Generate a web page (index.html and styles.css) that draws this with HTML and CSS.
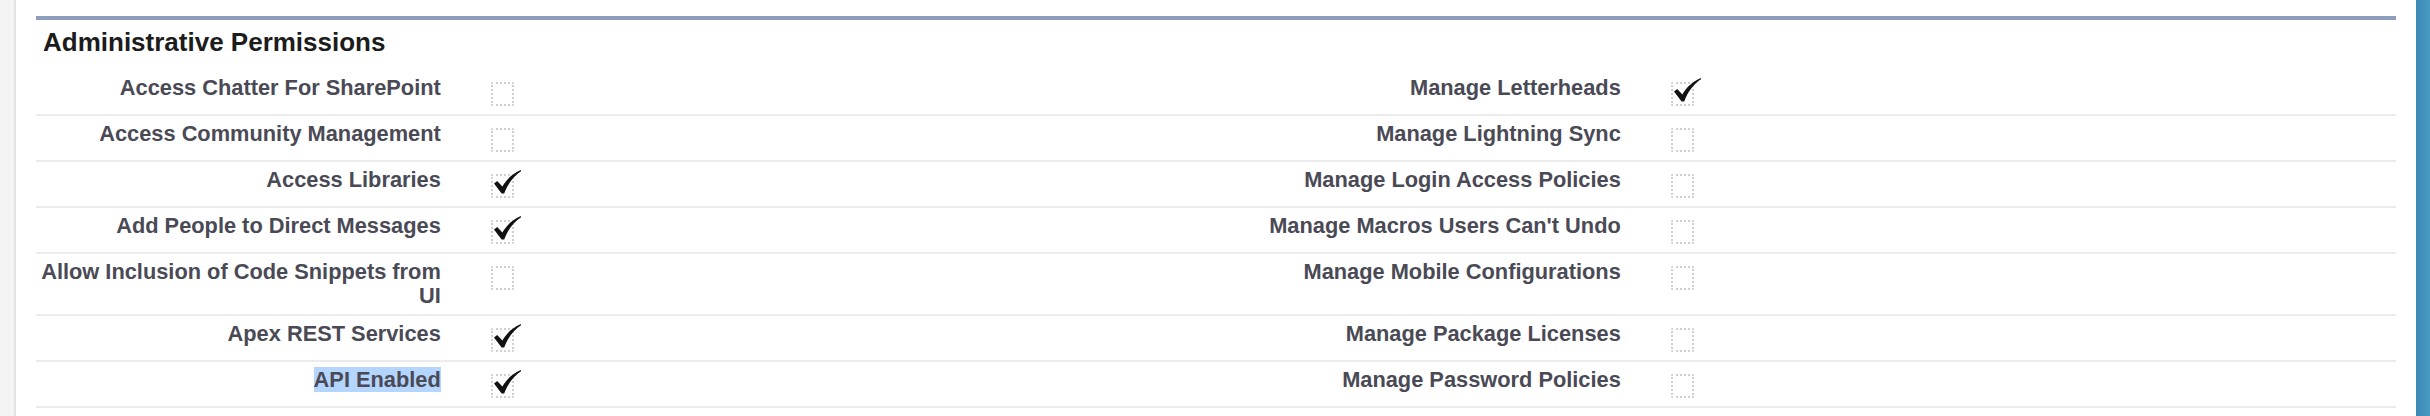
FILE: index.html
```html
<!DOCTYPE html>
<html>
<head>
<meta charset="utf-8">
<title>Administrative Permissions</title>
<link rel="stylesheet" href="styles.css">
</head>
<body>
<div class="frame">
  <div class="left-rail"></div>
  <div class="main">
    <div class="section">
      <h3 class="section-title">Administrative Permissions</h3>
      <table class="detail-list">
        <colgroup>
          <col class="c-label"><col class="c-data"><col class="c-label"><col class="c-data">
        </colgroup>
        <tbody>
          <tr>
            <td class="label">Access Chatter For SharePoint</td>
            <td class="data"><span class="cb"></span></td>
            <td class="label">Manage Letterheads</td>
            <td class="data"><span class="cb checked"><svg class="tick" viewBox="0 0 27 24" width="27" height="24"><path d="M0 13.5 L3.2 11 L8.4 16.6 C12 9.8 18 3.8 27 0 L27 1.3 C20 6 14 13 10.2 23.6 L7.6 23.6 Z"/></svg></span></td>
          </tr>
          <tr>
            <td class="label">Access Community Management</td>
            <td class="data"><span class="cb"></span></td>
            <td class="label">Manage Lightning Sync</td>
            <td class="data"><span class="cb"></span></td>
          </tr>
          <tr>
            <td class="label">Access Libraries</td>
            <td class="data"><span class="cb checked"><svg class="tick" viewBox="0 0 27 24" width="27" height="24"><path d="M0 13.5 L3.2 11 L8.4 16.6 C12 9.8 18 3.8 27 0 L27 1.3 C20 6 14 13 10.2 23.6 L7.6 23.6 Z"/></svg></span></td>
            <td class="label">Manage Login Access Policies</td>
            <td class="data"><span class="cb"></span></td>
          </tr>
          <tr>
            <td class="label">Add People to Direct Messages</td>
            <td class="data"><span class="cb checked"><svg class="tick" viewBox="0 0 27 24" width="27" height="24"><path d="M0 13.5 L3.2 11 L8.4 16.6 C12 9.8 18 3.8 27 0 L27 1.3 C20 6 14 13 10.2 23.6 L7.6 23.6 Z"/></svg></span></td>
            <td class="label">Manage Macros Users Can't Undo</td>
            <td class="data"><span class="cb"></span></td>
          </tr>
          <tr>
            <td class="label">Allow Inclusion of Code Snippets from UI</td>
            <td class="data"><span class="cb"></span></td>
            <td class="label">Manage Mobile Configurations</td>
            <td class="data"><span class="cb"></span></td>
          </tr>
          <tr>
            <td class="label">Apex REST Services</td>
            <td class="data"><span class="cb checked"><svg class="tick" viewBox="0 0 27 24" width="27" height="24"><path d="M0 13.5 L3.2 11 L8.4 16.6 C12 9.8 18 3.8 27 0 L27 1.3 C20 6 14 13 10.2 23.6 L7.6 23.6 Z"/></svg></span></td>
            <td class="label">Manage Package Licenses</td>
            <td class="data"><span class="cb"></span></td>
          </tr>
          <tr>
            <td class="label"><span class="selected">API Enabled</span></td>
            <td class="data"><span class="cb checked"><svg class="tick" viewBox="0 0 27 24" width="27" height="24"><path d="M0 13.5 L3.2 11 L8.4 16.6 C12 9.8 18 3.8 27 0 L27 1.3 C20 6 14 13 10.2 23.6 L7.6 23.6 Z"/></svg></span></td>
            <td class="label">Manage Password Policies</td>
            <td class="data"><span class="cb"></span></td>
          </tr>
        </tbody>
      </table>
    </div>
  </div>
  <div class="right-rail"></div>
</div>
</body>
</html>
```

FILE: styles.css
```css
html, body {
  margin: 0;
  padding: 0;
  background: #ffffff;
}

body {
  font-family: "Liberation Sans", Arial, Helvetica, sans-serif;
  color: #4a4a56;
}

.frame {
  display: flex;
  width: 2430px;
  height: 416px;
  overflow: hidden;
}

.left-rail {
  flex: 0 0 14px;
  background: #f4f4f4;
  border-right: 2px solid #e2e2e2;
}

.main {
  flex: 1 1 auto;
  padding: 16px 20px 0 20px;
  min-width: 0;
}

.right-rail {
  flex: 0 0 14px;
  background: linear-gradient(to right, #3b8ab5, #4799c3);
}

.section {
  border-top: 4px solid #8e9dbb;
}

.section-title {
  margin: 0;
  padding: 7px 0 13px 7px;
  font-size: 26px;
  line-height: 30px;
  font-weight: bold;
  color: #1c1c1c;
}

.detail-list {
  width: 100%;
  border-collapse: collapse;
  table-layout: fixed;
}

.c-label {
  width: 18%;
}

.c-data {
  width: 32%;
}

.detail-list td {
  border-bottom: 2px solid #ececec;
  vertical-align: top;
}

.label {
  padding: 6px 20px 6px 2px;
  text-align: right;
  font-size: 21.8px;
  line-height: 24px;
  font-weight: bold;
  color: #4a4a56;
}

.data {
  padding: 6px 4px 6px 20px;
}

.cb {
  display: block;
  position: relative;
  width: 23px;
  height: 24px;
  margin: 6px 0 2px 10px;
  box-sizing: border-box;
  border: 2px dotted #d0d0d0;
  border-radius: 2px;
}

.tick {
  position: absolute;
  left: 1px;
  top: -6px;
  fill: #111111;
}

.selected {
  background: #b4d5fe;
}
```
